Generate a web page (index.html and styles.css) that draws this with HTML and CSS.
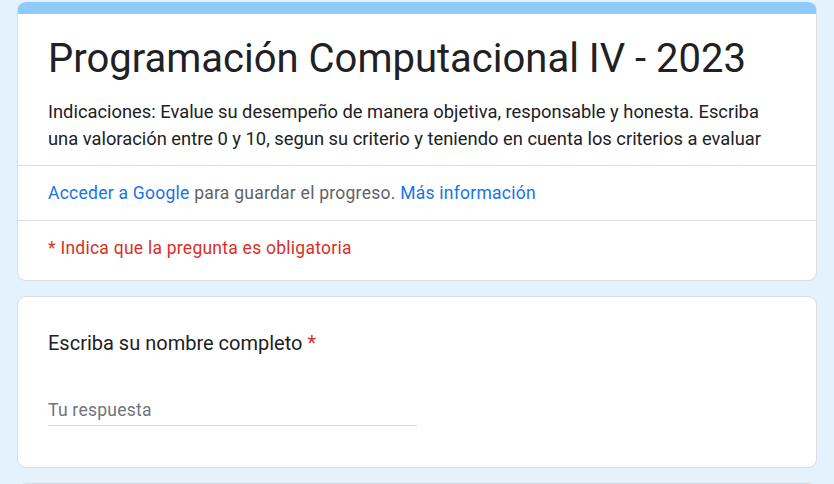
FILE: index.html
```html
<!DOCTYPE html>
<html lang="es">
<head>
<meta charset="utf-8">
<link rel="stylesheet" href="styles.css">
</head>
<body>
<main class="form">
  <section class="card header-card">
    <div class="header-main">
      <h1 class="title">Programación Computacional IV - 2023</h1>
      <p class="desc">Indicaciones: Evalue su desempeño de manera objetiva, responsable y honesta. Escriba una valoración entre 0 y 10, segun su criterio y teniendo en cuenta los criterios a evaluar</p>
    </div>
    <div class="header-row signin">
      <a class="link">Acceder a Google</a> para guardar el progreso. <a class="link">Más información</a>
    </div>
    <div class="header-row required">* Indica que la pregunta es obligatoria</div>
  </section>
  <section class="card question">
    <div class="q-title">Escriba su nombre completo <span class="star">*</span></div>
    <div class="answer"><span class="placeholder">Tu respuesta</span></div>
  </section>
  <section class="card next"></section>
</main>
</body>
</html>
```
FILE: styles.css
```css
html, body {
  margin: 0;
  padding: 0;
  background: #e3f2fd;
  font-family: Roboto, "Liberation Sans", sans-serif;
  color: #202124;
  overflow: hidden;
}
.form {
  width: 800px;
  margin: 2px auto 0;
  display: flex;
  flex-direction: column;
  gap: 15px;
}
.card {
  background: #fff;
  border: 1px solid #dadce0;
  border-radius: 9px;
}
.header-card {
  border-top: 12px solid #90caf9;
}
.header-main {
  padding: 21px 30px 13px;
  border-bottom: 1px solid #dadce0;
}
.title {
  margin: 0;
  font-weight: 400;
  font-size: 40px;
  line-height: 48px;
  letter-spacing: 0;
}
.desc {
  margin: 15px 0 0;
  font-size: 18.33px;
  line-height: 27px;
}
.header-row {
  padding: 0 30px;
  font-size: 17.5px;
  line-height: 24px;
  letter-spacing: 0.25px;
}
.signin {
  color: #5f6368;
  padding-top: 15px;
  padding-bottom: 15px;
  border-bottom: 1px solid #dadce0;
}
.link {
  color: #1a73e8;
  text-decoration: none;
}
.required {
  color: #d93025;
  padding-top: 15px;
  padding-bottom: 20px;
}
.question {
  padding: 31px 30px 41px;
}
.q-title {
  font-size: 20px;
  line-height: 30px;
}
.star {
  color: #d93025;
}
.answer {
  width: 50%;
  margin-top: 40px;
  border-bottom: 1px solid #dadce0;
  padding-bottom: 3px;
  font-size: 17.5px;
  line-height: 24px;
  letter-spacing: 0.25px;
}
.placeholder {
  color: #70757a;
}
.next {
  height: 40px;
}
```
